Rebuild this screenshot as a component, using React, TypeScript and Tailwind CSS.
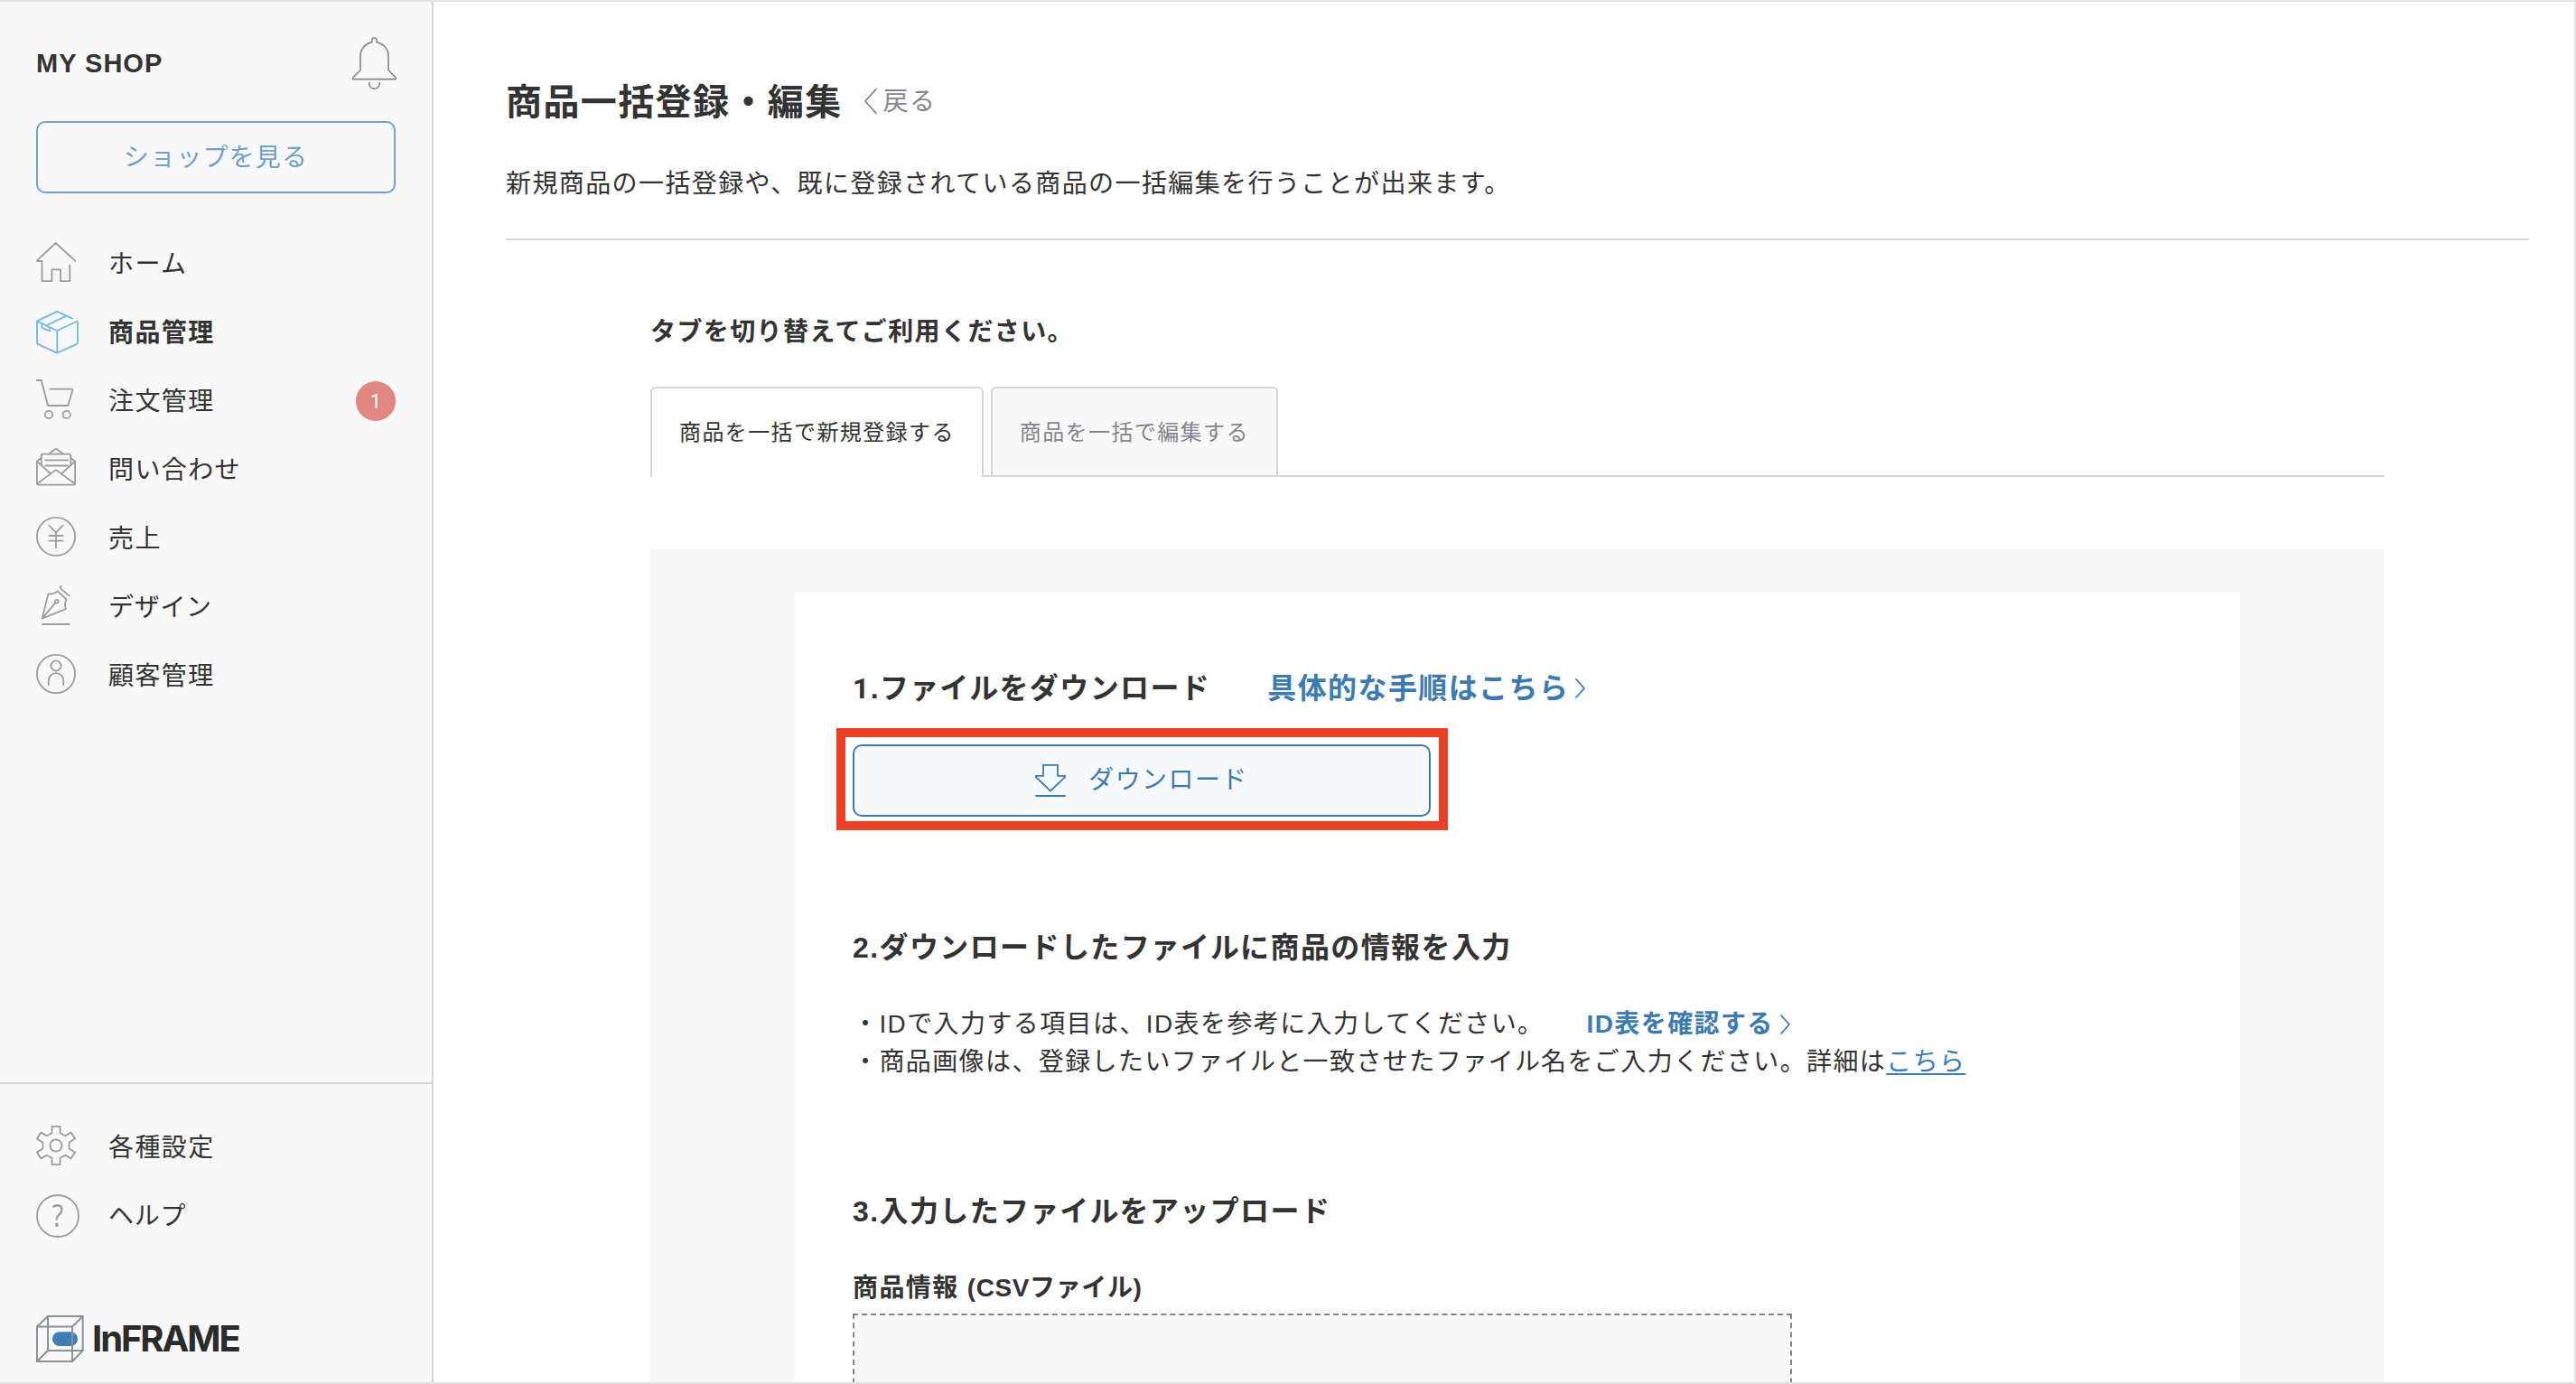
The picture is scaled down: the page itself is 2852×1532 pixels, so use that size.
import type { ReactNode } from "react";

const BODY_FONT = "font-['Liberation_Sans','Noto_Sans_CJK_JP',sans-serif]";

type IconProps = { w?: number; h?: number; className?: string; stroke?: number; children: ReactNode };

function Icon({ w = 44, h = 44, className = "text-[#9b9ba2]", stroke = 1.8, children }: IconProps) {
  return (
    <svg
      width={w}
      height={h}
      viewBox={`0 0 ${w} ${h}`}
      fill="none"
      stroke="currentColor"
      strokeWidth={stroke}
      strokeLinejoin="round"
      strokeLinecap="round"
      className={`block shrink-0 overflow-visible ${className}`}
    >
      {children}
    </svg>
  );
}

const BellIcon = () => (
  <Icon w={49} h={58} className="text-[#85858d]" stroke={1.6}>
    <path d="M21.7 5.9V3.7a2.7 2.7 0 0 1 5.4 0v2.2C35 7.4 40 13.5 40 21v15.7l8.3 8.3v1.6H.7V45L9 36.7V21C9 13.5 14 7.4 21.7 5.9z" />
    <path d="M18.8 50.5v1.5a5.6 5.3 0 0 0 11.3 0v-1.5" />
  </Icon>
);

const HomeIcon = () => (
  <Icon>
    <path d="M43.2 20.7 21.7 1 1 20.3V21h5.5v22.2h10.9V30.4h9.7v12.8h10.2V25.5" />
  </Icon>
);

const BoxIcon = () => (
  <Icon w={47} h={48} className="text-[#76bbdf]" stroke={1.9}>
    <path d="M40 8.7 23.9 1.1q-.6-.3-1.2 0L1 11.4v24.2q0 .8.7 1.2l21.6 9.9 21.8-9.9q.9-.4.9-1.2V13q0-1.7-1.5-1L23.3 22 1 11.7M23.3 22v24.500" />
    <path d="M34 5.3 12.3 15.8M6.5 14.5v3.6q0 .8.7 1.1l6.8 2.9q1.2.4 1.2-.7v-3" />
  </Icon>
);

const CartIcon = () => (
  <Icon>
    <path d="M.9 1h4.900L13 29h22.3l5.100-17.300q.2-1-.8-1H15.400" />
    <circle cx="14" cy="39" r="4.2" />
    <circle cx="33.7" cy="39" r="4.2" />
  </Icon>
);

const MailIcon = () => (
  <Icon>
    <path d="M5.7 10.8.9 14.7v24.4q0 1.600 1.600 1.600h39q1.600 0 1.600-1.600V14.700l-4.800-3.900" />
    <path d="M5.7 19V8.5q0-1.800 1.700-1.800h29.200q1.700 0 1.700 1.800V19" />
    <path d="M.9 14.7 15.6 28M43.1 14.7 28.4 28M1.5 39.2 20.8 24.900q1.200-.9 2.400 0l19.300 14.300" />
    <path d="m14.300 6.300 6.700-5q1-.7 2 0l6.700 5M10.300 13.300H35M10.300 19.500H35" />
  </Icon>
);

const YenIcon = () => (
  <Icon>
    <circle cx="22" cy="22" r="21.1" />
    <path d="m14.500 9.500 7.500 8.200 7.500-8.200M22 17.700v16.800M14.500 21h15M14.500 26.600h15" />
  </Icon>
);

const PenIcon = () => (
  <Icon>
    <path d="M6.7 36.6 13.3 9.6c4.4.1 7.7-.6 10.4-3.2l9.8 8.9c-1.8 3.7-1.9 7-.5 10.7z" />
    <path d="M6.9 36.4 21.3 19.3M27.8.7q-1.7 1.6-.4 2.9l9.3 8M6.9 43h29.7" />
    <circle cx="22.7" cy="17.7" r="1.9" />
  </Icon>
);

const PersonIcon = () => (
  <Icon>
    <circle cx="22" cy="22" r="21.1" />
    <circle cx="22" cy="13" r="5.6" />
    <path d="M13.8 34.2v-4.900a8.200 8.200 0 0 1 16.400 0v4.900" />
  </Icon>
);

const GearIcon = () => (
  <Icon>
    <circle cx="22" cy="22" r="6.6" />
    <path d="M17.4.9h9.2v7.4l5.7 3 6.3-3.7 4.5 7-6.5 4v6.8l6.5 4-4.5 7-6.3-3.7-5.7 3v7.4h-9.2v-7.4l-5.7-3-6.3 3.7-4.5-7 6.5-4v-6.8l-6.5-4 4.5-7 6.3 3.7 5.7-3z" />
  </Icon>
);

const HelpIcon = () => (
  <Icon w={48} h={48}>
    <circle cx="24" cy="24" r="23" />
    <text
      transform="translate(24 36) scale(.82 1)"
      textAnchor="middle"
      fontSize="35"
      fill="currentColor"
      stroke="none"
      className="font-['Open_Sans',sans-serif] tracking-normal"
    >
      ?
    </text>
  </Icon>
);

const DownloadIcon = () => (
  <Icon w={35} h={36} className="text-[#3c7ab0]">
    <path strokeLinejoin="miter" d="M9 .9h16v12h8.2v1.2L17 29.4.9 14.1v-1.2H9zM1 35h32" />
  </Icon>
);

const CubeLogo = () => (
  <Icon w={53} h={52} className="text-[#8c9197]" stroke={2}>
    <rect x="18" y="18.3" width="28" height="15.7" rx="7.85" fill="#3f7db2" stroke="none" />
    <path
      strokeLinejoin="miter"
      d="M1 12.5h39V51H1zM13 1h38.7v38H13zM1 12.5 13 1M40 12.5 51.7 1M1 51l12-12M40 51l11.7-12"
    />
  </Icon>
);

const ChevronLeft = () => (
  <Icon w={14} h={28} className="mb-0.5 text-[#85858f]">
    <path d="M13 .7 1 14l12 13.3" />
  </Icon>
);

const ChevronRight = () => (
  <Icon w={11} h={22} className="text-[#3c7ab0]">
    <path d="M1 1l9 10-9 10" />
  </Icon>
);

type NavItem = { label: string; icon: ReactNode; active?: boolean; badge?: number; tight?: boolean };

const mainNav: NavItem[] = [
  { label: "ホーム", icon: <HomeIcon /> },
  { label: "商品管理", icon: <BoxIcon />, active: true },
  { label: "注文管理", icon: <CartIcon />, badge: 1 },
  { label: "問い合わせ", icon: <MailIcon /> },
  { label: "売上", icon: <YenIcon /> },
  { label: "デザイン", icon: <PenIcon />, tight: true },
  { label: "顧客管理", icon: <PersonIcon /> },
];

const subNav: NavItem[] = [
  { label: "各種設定", icon: <GearIcon /> },
  { label: "ヘルプ", icon: <HelpIcon />, tight: true },
];

function NavRow({ label, icon, active, badge, tight }: NavItem) {
  return (
    <li className="flex h-[76px] items-start px-10 pt-[14px]">
      <div className="w-20 shrink-0">{icon}</div>
      <span className={`grow leading-[50px] ${active ? "font-bold" : ""} ${tight ? "tracking-[0.7px]" : ""}`}>
        {label}
      </span>
      {badge !== undefined && (
        <span className="mt-0.5 flex size-11 items-center justify-center rounded-full bg-[#e18581] font-['Roboto',sans-serif] text-[22px] tracking-normal text-white">
          {badge}
        </span>
      )}
    </li>
  );
}

function Sidebar() {
  return (
    <aside className="flex w-[480px] shrink-0 flex-col border-r-2 border-[#d5d5dc] bg-[#f8f8f8]">
      <div className="flex h-[132px] items-start justify-between pt-[39px] pr-[39px] pl-10">
        <span className="text-[29px] leading-[58px] font-bold tracking-[1px]">MY SHOP</span>
        <BellIcon />
      </div>
      <button className="mx-10 h-20 w-[398px] rounded-[10px] border-2 border-[#71a0ca] leading-[77px] tracking-[1.2px] text-[#71a0ca]">
        ショップを見る
      </button>
      <ul className="mt-10 grow">
        {mainNav.map((item) => (
          <NavRow key={item.label} {...item} />
        ))}
      </ul>
      <div className="h-[332px] border-t-2 border-[#d5d5dc] pt-8">
        <ul>
          {subNav.map((item) => (
            <NavRow key={item.label} {...item} />
          ))}
        </ul>
        <div className="mt-[72px] flex h-[52px] items-center px-10">
          <CubeLogo />
          <span className="ml-[9px] font-['Inter',sans-serif] text-[40px] leading-[52px] font-bold tracking-[-2.1px] text-[#2b2b2b]">
            InFRAME
          </span>
        </div>
      </div>
    </aside>
  );
}

function Tabs() {
  return (
    <div className="mt-[39px] flex h-[100px] text-[24px] leading-[98px]">
      <div className="rounded-t-[6px] border-2 border-b-0 border-[#d5d5dc] px-[30px] whitespace-nowrap">
        商品を一括で新規登録する
      </div>
      <div className="w-2 border-b-2 border-[#d5d5dc]" />
      <div className="rounded-t-[6px] border-2 border-[#d5d5dc] bg-[#f8f8f8] px-[30px] whitespace-nowrap text-[#85858f]">
        商品を一括で編集する
      </div>
      <div className="grow border-b-2 border-[#d5d5dc]" />
    </div>
  );
}

const FileWord = () => <span className="tracking-[1.1px]">ファイル</span>;

function Steps() {
  return (
    <div className="mx-[160px] h-[900px] bg-white px-16 pt-[82px]">
      <div className="flex h-12 items-center text-[32px] leading-[48px] font-bold">
        <h2>
          <span className="font-['Roboto',sans-serif]">1</span>.
          <FileWord />
          をダウンロード
        </h2>
        <a className="ml-[63px] flex items-center gap-[7px] text-[#3c7ab0]">
          具体的な手順はこちら
          <ChevronRight />
        </a>
      </div>
      <div className="mt-5 -ml-[18px] h-[113px] w-[677px] border-10 border-[#e94025] p-2">
        <button className="flex h-20 w-[640px] items-center justify-center rounded-[10px] border-2 border-[#3c7ab0] bg-[#f8f9fd] tracking-[1.4px] text-[#3c7ab0]">
          <DownloadIcon />
          <span className="ml-6 leading-[74px]">ダウンロード</span>
        </button>
      </div>

      <h2 className="mt-[106px] text-[32px] leading-[48px] font-bold">
        2.ダウンロードした
        <FileWord />
        に商品の情報を入力
      </h2>
      <div className="mt-10 leading-[42px]">
        <p className="flex items-center">
          ・IDで入力する項目は、ID表を参考に入力してください。
          <a className="ml-[47px] flex items-center gap-[7px] font-bold text-[#3c7ab0]">
            ID表を確認する
            <ChevronRight />
          </a>
        </p>
        <p>
          ・商品画像は、登録したい
          <FileWord />
          と一致させた
          <FileWord />
          名をご入力ください。詳細は
          <a className="text-[#3c7ab0] underline decoration-2 underline-offset-[3px]">こちら</a>
        </p>
      </div>

      <h2 className="mt-[120px] text-[32px] leading-[48px] font-bold">
        3.入力した
        <FileWord />
        をアップロード
      </h2>
      <h3 className="mt-10 leading-[42px] font-bold">
        商品情報 <span className="tracking-[0.6px]">(CSVファイル)</span>
      </h3>
      <div className="mt-[7px] h-[200px] w-[1040px] border-2 border-dashed border-[#85858f] bg-[#f8f8f8]" />
    </div>
  );
}

export default function App() {
  return (
    <div
      className={`flex h-[1532px] w-[2852px] overflow-hidden border-t-2 border-r-2 border-b-2 border-[#e4e4e3] bg-white text-[28px] tracking-[1.4px] text-[#333333] ${BODY_FONT}`}
    >
      <Sidebar />
      <main className="grow overflow-hidden pr-[50px] pl-20">
        <header className="h-[264px] border-b-2 border-[#d5d5dc] pt-[81px]">
          <div className="flex h-[60px] items-center">
            <h1 className="text-[40px] leading-[60px] font-bold">商品一括登録・編集</h1>
            <a className="ml-6 flex items-center gap-[7px] text-[#85858f]">
              <ChevronLeft />
              戻る
            </a>
          </div>
          <p className="mt-10 leading-[42px]">
            新規商品の一括登録や、既に登録されている商品の一括編集を行うことが出来ます。
          </p>
        </header>
        <section className="mx-40 pt-[81px]">
          <p className="leading-[42px] font-bold">タブを切り替えてご利用ください。</p>
          <Tabs />
          <div className="mt-20 bg-[#f8f8f8] pt-12">
            <Steps />
          </div>
        </section>
      </main>
    </div>
  );
}
